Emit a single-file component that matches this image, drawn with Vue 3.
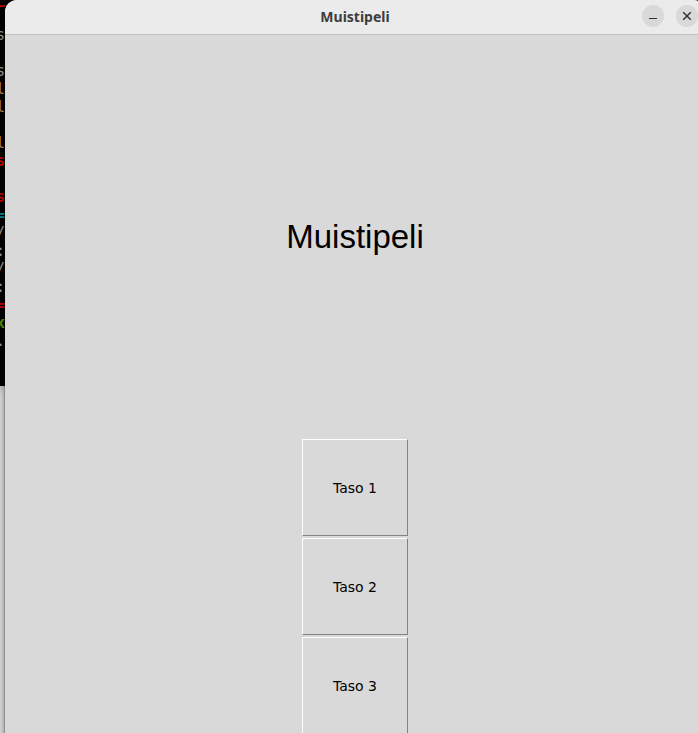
<script setup>
const terminalRows = [
  { text: '' },
  { text: 's' },
  { text: '' },
  { text: 's' },
  { text: 'l', tone: 'tan' },
  { text: 'l', tone: 'tan' },
  { text: '' },
  { text: 'l', tone: 'tan' },
  { text: 's', tone: 'red' },
  { text: '' },
  { text: 's', tone: 'red' },
  { text: '=', tone: 'cyan' },
  { text: '/' },
  { text: ':' },
  { text: '/' },
  { text: ':' },
  { text: '=', tone: 'red' },
  { text: 'x', tone: 'green' },
  { text: '.' },
]
const levels = [1, 2, 3]
</script>

<template>
  <div class="desktop">
    <aside class="behind">
      <div class="terminal">
        <div v-for="(row, i) in terminalRows.slice(1)" :key="i" class="row" :class="row.tone">{{ row.text }}</div>
      </div>
    </aside>
    <div class="window">
      <header class="titlebar">
        <span class="title">Muistipeli</span>
        <div class="controls">
          <button class="control" type="button" aria-label="Minimize">
            <svg width="22" height="22" viewBox="0 0 22 22"><path d="M7 13.5h8" stroke="#333" fill="none" /></svg>
          </button>
          <button class="control" type="button" aria-label="Close">
            <svg width="22" height="22" viewBox="0 0 22 22"><path d="M7.2 7.2l7.6 7.6M14.8 7.2l-7.6 7.6" stroke="#333" stroke-width="1.5" fill="none" /></svg>
          </button>
        </div>
      </header>
      <main class="game">
        <h1 class="heading">Muistipeli</h1>
        <div class="levels">
          <button v-for="n in levels" :key="n" class="level" type="button">Taso {{ n }}</button>
        </div>
      </main>
    </div>
  </div>
</template>

<style>
body {
  margin: 0;
  background: #d9d9d9;
}
</style>

<style scoped>
.desktop {
  display: flex;
  height: 100vh;
  overflow: hidden;
  background: #000;
}
.behind {
  flex: none;
  width: 5px;
  overflow: hidden;
  box-sizing: border-box;
  background: linear-gradient(to right, #d2d2d2, #b4b4b4 80%, #8e8e8e 80%);
}
.terminal {
  box-sizing: border-box;
  height: 386px;
  padding-top: 26px;
  background: linear-gradient(#000 5px, #b00000 5px, #b00000 7px, #000 7px);
  box-shadow: 0 2px 8px #777;
}
.row {
  display: flex;
  justify-content: flex-end;
  height: 18px;
  font: 15px/18px "DejaVu Sans Mono", monospace;
  color: #8c8c88;
}
.tan { color: #a87544; }
.red { color: #b00000; font-weight: bold; }
.cyan { color: #087f84; font-weight: bold; }
.green { color: #3f8707; font-weight: bold; }
.window {
  flex: 1 0 auto;
  width: calc(100% + 2px);
  display: flex;
  flex-direction: column;
  background: #d9d9d9;
  border-radius: 12px 12px 0 0;
  overflow: hidden;
}
.titlebar {
  flex: none;
  box-sizing: border-box;
  height: 35px;
  display: grid;
  grid-template-columns: 1fr auto 1fr;
  align-items: center;
  padding: 0 7px;
  background: #ebebeb;
  border-bottom: 1px solid #bfbfbf;
}
.title {
  grid-column: 2;
  font: bold 14px/20px "Noto Sans", sans-serif;
  color: #3d3d3d;
}
.controls {
  display: flex;
  justify-content: flex-end;
  gap: 12px;
  padding-bottom: 2px;
}
.control {
  width: 22px;
  height: 22px;
  padding: 0;
  border: 0;
  border-radius: 50%;
  background: #d9d9d9;
}
.control svg {
  display: block;
}
.game {
  display: flex;
  flex-direction: column;
  align-items: center;
}
.heading {
  margin: 0;
  padding: 182px 0;
  font: 33px/40px "Liberation Sans", Arial, sans-serif;
  color: #000;
}
.levels {
  display: flex;
  flex-direction: column;
  gap: 2px;
}
.level {
  width: 106px;
  height: 97px;
  padding: 0;
  border: 1px solid;
  border-color: #fff #828282 #828282 #fff;
  background: #d9d9d9;
  color: #000;
  font: 14px/16px "DejaVu Sans", sans-serif;
}
</style>
